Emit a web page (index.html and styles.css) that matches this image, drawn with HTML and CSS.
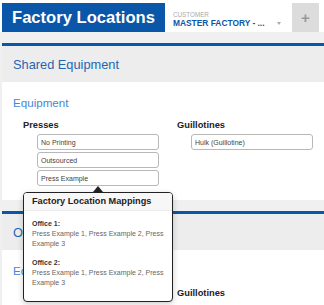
FILE: index.html
```html
<!DOCTYPE html>
<html>
<head>
<meta charset="utf-8">
<link rel="stylesheet" href="styles.css">
</head>
<body>
<header class="topbar">
  <div class="title">Factory Locations</div>
  <div class="customer">
    <div class="cust-label">CUSTOMER</div>
    <div class="cust-value">MASTER FACTORY - ...</div>
    <span class="caret"></span>
  </div>
  <div class="add">+</div>
</header>

<section class="panel">
  <div class="spacer"></div>
  <div class="panel-head">Shared Equipment</div>
  <div class="panel-body">
    <div class="subhead">Equipment</div>
    <div class="cols">
      <div class="col">
        <div class="col-label">Presses</div>
        <div class="items">
          <div class="item">No Printing</div>
          <div class="item">Outsourced</div>
          <div class="item">Press Example</div>
        </div>
      </div>
      <div class="col">
        <div class="col-label">Guillotines</div>
        <div class="items">
          <div class="item">Hulk (Guillotine)</div>
        </div>
      </div>
    </div>
  </div>
</section>

<section class="panel">
  <div class="spacer"></div>
  <div class="panel-head">Office 1</div>
  <div class="panel-body">
    <div class="subhead">Equipment</div>
    <div class="cols">
      <div class="col">
        <div class="col-label">Presses</div>
      </div>
      <div class="col">
        <div class="col-label">Guillotines</div>
      </div>
    </div>
  </div>
</section>

<div class="popover">
  <div class="pop-head">Factory Location Mappings</div>
  <div class="pop-body">
    <div class="pop-group">
      <div class="pop-title">Office 1:</div>
      <div class="pop-text">Press Example 1, Press Example 2, Press Example 3</div>
    </div>
    <div class="pop-group">
      <div class="pop-title">Office 2:</div>
      <div class="pop-text">Press Example 1, Press Example 2, Press Example 3</div>
    </div>
  </div>
</div>
</body>
</html>
```

FILE: styles.css
```css
html, body {
  margin: 0;
  padding: 0;
}
body {
  font-family: "Liberation Sans", Arial, sans-serif;
  background: #fff;
  position: relative;
  height: 305px;
  overflow: hidden;
}
.topbar {
  display: flex;
  height: 29px;
  margin: 3px 5px 0 2px;
}
.title {
  background: #0a56a8;
  color: #fff;
  font-weight: bold;
  font-size: 16.6px;
  width: 163px;
  padding-left: 10px;
  box-sizing: border-box;
  display: flex;
  align-items: center;
}
.customer {
  flex: 1;
  position: relative;
  padding: 8px 0 0 8px;
}
.cust-label {
  font-size: 6.3px;
  line-height: 7px;
  color: #aaa;
}
.cust-value {
  font-size: 8.4px;
  line-height: 10px;
  font-weight: bold;
  color: #0a56a8;
}
.caret {
  position: absolute;
  left: 112px;
  top: 19px;
  width: 0;
  height: 0;
  border-left: 2.5px solid transparent;
  border-right: 2.5px solid transparent;
  border-top: 3px solid #aaa;
}
.add {
  width: 27px;
  background: #dcdcdc;
  color: #999;
  font-size: 15px;
  font-weight: bold;
  display: flex;
  align-items: center;
  justify-content: center;
}
.panel {
  border-left: 2px solid #f0f0f0;
}
.spacer {
  height: 11px;
  background: #f0f0f0;
}
.panel-head {
  border-top: 3px solid #0a56a8;
  background: #ededed;
  height: 36px;
  padding-left: 11px;
  display: flex;
  align-items: center;
  font-size: 12.8px;
  color: #1f66b3;
}
.panel-body {
  padding: 14px 11px 14px 21px;
}
.subhead {
  font-size: 11.6px;
  line-height: 14px;
  color: #3f88d6;
  margin-left: -10px;
}
.cols {
  display: grid;
  grid-template-columns: 1fr 1fr;
  column-gap: 18px;
  margin-top: 10px;
}
.col-label {
  font-size: 9.3px;
  line-height: 11px;
  font-weight: bold;
  color: #222;
}
.items {
  display: flex;
  flex-direction: column;
  gap: 2px;
  padding-left: 14px;
  margin-top: 3px;
}
.item {
  height: 16px;
  border: 1px solid #b8b8b8;
  border-radius: 3px;
  box-sizing: border-box;
  font-size: 7px;
  color: #444;
  padding-left: 3px;
  display: flex;
  align-items: center;
}
.popover {
  position: absolute;
  left: 23px;
  top: 192px;
  width: 150px;
  height: 110px;
  box-sizing: border-box;
  border: 1.5px solid #222;
  border-radius: 4px;
  background: #fff;
  box-shadow: 0 2px 6px rgba(0,0,0,0.2);
}
.popover::before {
  content: "";
  position: absolute;
  left: 69px;
  top: -7px;
  border-left: 5px solid transparent;
  border-right: 5px solid transparent;
  border-bottom: 6px solid #222;
}
.pop-head {
  background: #f7f7f7;
  border-bottom: 1px solid #ebebeb;
  border-radius: 3px 3px 0 0;
  font-size: 9.2px;
  line-height: 11px;
  font-weight: bold;
  color: #222;
  padding: 3px 8px 3px 8px;
}
.pop-body {
  padding: 8px 8px 0 8px;
}
.pop-group + .pop-group {
  margin-top: 9px;
}
.pop-title {
  font-size: 7px;
  line-height: 10px;
  font-weight: bold;
  color: #333;
}
.pop-text {
  font-size: 7px;
  line-height: 10px;
  color: #666;
}
```
